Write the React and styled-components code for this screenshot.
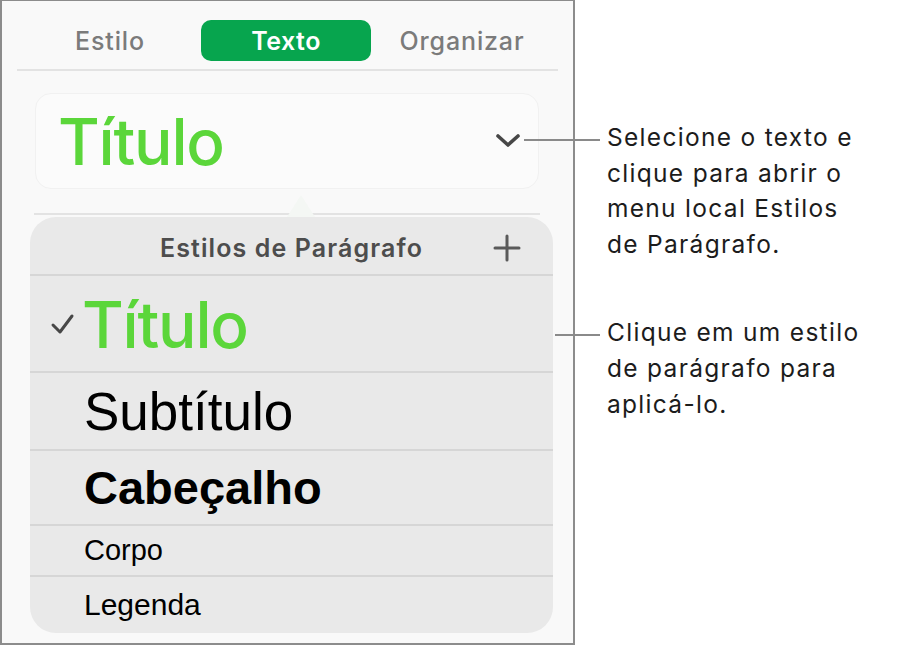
import React from "react";
import styled, { createGlobalStyle } from "styled-components";

const GlobalStyle = createGlobalStyle`
  html, body {
    margin: 0;
    padding: 0;
    background: #ffffff;
  }
  * {
    box-sizing: border-box;
  }
`;

const Page = styled.div`
  display: flex;
  align-items: flex-start;
  width: 904px;
  height: 646px;
  background: #ffffff;
  font-family: Inter, "Noto Sans", sans-serif;
`;

const Panel = styled.div`
  display: flex;
  flex-direction: column;
  width: 575px;
  height: 645px;
  background: #f9f9f9;
  border: 2px solid #8c8c8c;
  border-top-width: 1px;
`;

const TabBar = styled.div`
  display: grid;
  grid-template-columns: repeat(3, 1fr);
  column-gap: 6px;
  margin: 19px 26px 0 23px;
`;

const Tab = styled.div`
  display: flex;
  align-items: center;
  justify-content: center;
  height: 41px;
  border-radius: 10px;
  font-size: 25px;
  font-weight: ${(p) => (p.active ? 600 : 500)};
  letter-spacing: ${(p) => (p.active ? 0.5 : 0.85)}px;
  color: ${(p) => (p.active ? "#ffffff" : "#7b7b7b")};
  background: ${(p) => (p.active ? "#07a54e" : "transparent")};
`;

const Rule = styled.div`
  height: 2px;
  background: #e3e3e3;
  margin: ${(p) => p.margin};
`;

const StyleBox = styled.div`
  display: flex;
  align-items: center;
  justify-content: space-between;
  height: 96px;
  margin: 22px 34px 0 33px;
  padding: 0 17px 0 22px;
  background: #fbfbfb;
  border: 1px solid #f1f1f1;
  border-radius: 16px;
`;

const BigTitle = styled.span`
  font-family: Inter, "Liberation Sans", sans-serif;
  font-size: 64px;
  font-weight: 500;
  letter-spacing: -1.2px;
  color: #5bd63a;
  line-height: 1;
  padding-top: 2px;
`;

const Popover = styled.div`
  position: relative;
  display: flex;
  flex-direction: column;
  margin: 2px 20px 0 28px;
  background: #e9e9e9;
  border-radius: 26px;
`;

const Arrow = styled.div`
  position: absolute;
  top: -22px;
  left: 257px;
  width: 0;
  height: 0;
  border-left: 14px solid transparent;
  border-right: 14px solid transparent;
  border-bottom: 22px solid #f4f7f4;
`;

const PopHeader = styled.div`
  position: relative;
  display: flex;
  align-items: center;
  justify-content: center;
  height: 59px;
  padding-top: 4px;
  border-bottom: 2px solid #d6d6d6;
  font-size: 25px;
  font-weight: 600;
  color: #4d4d4d;
  letter-spacing: 1.1px;
`;

const PlusButton = styled.div`
  position: absolute;
  right: 32px;
  top: 17px;
  width: 28px;
  height: 28px;
`;

const Row = styled.div`
  display: flex;
  align-items: center;
  height: ${(p) => p.h}px;
  padding-left: 20px;
  border-bottom: ${(p) => (p.last ? "none" : "2px solid #d6d6d6")};
`;

const CheckSlot = styled.div`
  display: flex;
  align-items: center;
  width: 30px;
  height: 30px;
  margin-right: ${(p) => (p.tight ? 2 : 4)}px;
`;

const RowLabel = styled.span`
  font-family: "Liberation Sans", Arial, sans-serif;
  font-size: ${(p) => p.size}px;
  font-weight: ${(p) => (p.bold ? 700 : 400)};
  color: #000000;
  line-height: 1;
`;

const Notes = styled.div`
  display: flex;
  flex-direction: column;
  margin-left: 32px;
  padding-top: 120px;
`;

const Note = styled.p`
  position: relative;
  margin: ${(p) => p.gap}px 0 0;
  font-size: 24.5px;
  line-height: 35.6px;
  color: #1c1c1c;
  letter-spacing: 1.3px;

  &::before {
    content: "";
    position: absolute;
    top: 19px;
    left: -${(p) => p.lead + 7}px;
    width: ${(p) => p.lead}px;
    height: 2px;
    background: #8a8a8a;
  }
`;

const Chevron = () => (
  <svg width="26" height="16" viewBox="0 0 26 16">
    <path
      d="M3 3 L13 12 L23 3"
      fill="none"
      stroke="#474747"
      strokeWidth="3.6"
      strokeLinecap="round"
      strokeLinejoin="round"
    />
  </svg>
);

const Check = () => (
  <svg width="26" height="24" viewBox="0 0 26 24">
    <path
      d="M3 13 L10 20 L22 4"
      fill="none"
      stroke="#474747"
      strokeWidth="3"
      strokeLinecap="round"
      strokeLinejoin="round"
    />
  </svg>
);

const Plus = () => (
  <svg width="28" height="28" viewBox="0 0 28 28">
    <path
      d="M14 2 V26 M2 14 H26"
      stroke="#5a5a5a"
      strokeWidth="3"
      strokeLinecap="round"
    />
  </svg>
);

const styles = [
  { label: "Título", h: 97, title: true },
  { label: "Subtítulo", size: 53, h: 78 },
  { label: "Cabeçalho", size: 47, h: 75, bold: true },
  { label: "Corpo", size: 29, h: 51 },
  { label: "Legenda", size: 30, h: 56 },
];

export default function App() {
  return (
    <>
      <GlobalStyle />
      <Page>
        <Panel>
          <TabBar>
            <Tab>Estilo</Tab>
            <Tab active>Texto</Tab>
            <Tab>Organizar</Tab>
          </TabBar>
          <Rule margin="8px 15px 0" />
          <StyleBox>
            <BigTitle>Título</BigTitle>
            <Chevron />
          </StyleBox>
          <Rule margin="24px 33px 0 32px" />
          <Popover>
            <Arrow />
            <PopHeader>
              Estilos de Parágrafo
              <PlusButton>
                <Plus />
              </PlusButton>
            </PopHeader>
            {styles.map((s, i) =>
              s.title ? (
                <Row key={s.label} h={s.h}>
                  <CheckSlot tight>
                    <Check />
                  </CheckSlot>
                  <BigTitle>{s.label}</BigTitle>
                </Row>
              ) : (
                <Row key={s.label} h={s.h} last={i === styles.length - 1}>
                  <CheckSlot />
                  <RowLabel size={s.size} bold={s.bold}>
                    {s.label}
                  </RowLabel>
                </Row>
              )
            )}
          </Popover>
        </Panel>
        <Notes>
          <Note gap={0} lead={76}>
            Selecione o texto e
            <br />
            clique para abrir o
            <br />
            menu local Estilos
            <br />
            de Parágrafo.
          </Note>
          <Note gap={53} lead={45}>
            Clique em um estilo
            <br />
            de parágrafo para
            <br />
            aplicá-lo.
          </Note>
        </Notes>
      </Page>
    </>
  );
}
